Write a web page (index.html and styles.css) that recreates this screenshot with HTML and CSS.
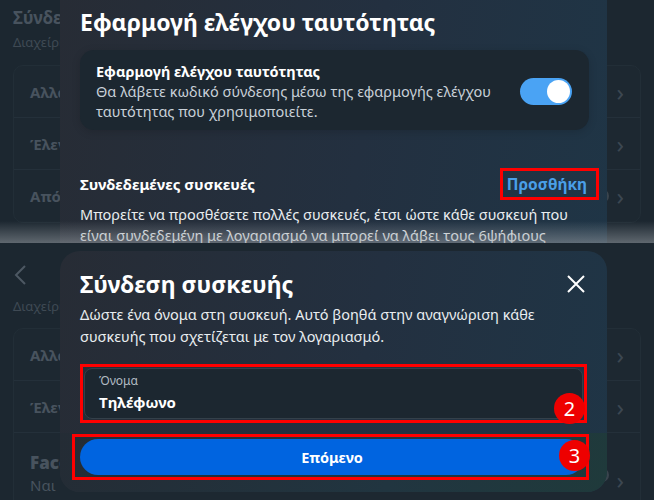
FILE: index.html
```html
<!DOCTYPE html>
<html lang="el">
	<head>
		<meta charset="utf-8"/>
		<meta name="viewport" content="width=device-width, initial-scale=1">
		<link rel="stylesheet" href="styles.css">
		<title>Εφαρμογή ελέγχου ταυτότητας</title>
	</head>
	<body>
		<!-- first capture: authenticator settings sheet -->
		<div class="shot shot-top">
			<div class="page">
				<div class="page-head">
					<h2>Σύνδεση</h2>
					<p>Διαχείριση</p>
				</div>
				<div class="list">
					<div class="row"><span>Αλλαγή</span><span class="chev">&#8250;</span></div>
					<div class="row"><span>Έλεγχος</span><span class="chev">&#8250;</span></div>
					<div class="row"><span>Απόρρητο</span><span class="dot"></span><span class="chev">&#8250;</span></div>
				</div>
			</div>
			<div class="sheet sheet-top">
				<h1>Εφαρμογή ελέγχου ταυτότητας</h1>
				<div class="card">
					<div class="card-text">
						<strong>Εφαρμογή ελέγχου ταυτότητας</strong>
						<p>Θα λάβετε κωδικό σύνδεσης μέσω της εφαρμογής ελέγχου ταυτότητας που χρησιμοποιείτε.</p>
					</div>
					<div class="toggle"><span class="knob"></span></div>
				</div>
				<div class="devices-head">
					<strong>Συνδεδεμένες συσκευές</strong>
					<span class="mark add">Προσθήκη</span>
				</div>
				<p class="devices-text">Μπορείτε να προσθέσετε πολλές συσκευές, έτσι ώστε κάθε συσκευή που είναι συνδεδεμένη με λογαριασμό να μπορεί να λάβει τους 6ψήφιους κωδικούς.</p>
			</div>
			<div class="fade"></div>
		</div>

		<!-- second capture: add device dialog -->
		<div class="shot shot-bottom">
			<div class="page">
				<div class="page-head">
					<span class="back">
						<svg width="14" height="22" viewBox="0 0 14 22"><path d="M12 2 L3 11 L12 20" fill="none" stroke="#4d5863" stroke-width="2"/></svg>
					</span>
					<p>Διαχείριση</p>
				</div>
				<div class="list">
					<div class="row"><span>Αλλαγή</span><span class="chev">&#8250;</span></div>
					<div class="row"><span>Έλεγχος</span><span class="chev">&#8250;</span></div>
					<div class="row row-two"><span class="two"><b>Face ID</b><i>Ναι</i></span><span class="dot"></span><span class="chev">&#8250;</span></div>
				</div>
			</div>
			<div class="sheet sheet-bottom">
				<div class="dialog-head">
					<h1>Σύνδεση συσκευής</h1>
					<svg class="close" width="18" height="18" viewBox="0 0 18 18"><path d="M1 1 L17 17 M17 1 L1 17" stroke="#ffffff" stroke-width="2"/></svg>
				</div>
				<p class="dialog-text">Δώστε ένα όνομα στη συσκευή. Αυτό βοηθά στην αναγνώριση κάθε συσκευής που σχετίζεται με τον λογαριασμό.</p>
				<div class="mark field-mark">
					<div class="field">
						<span class="label">Όνομα</span>
						<span class="value">Τηλέφωνο</span>
					</div>
					<span class="badge badge-2">2</span>
				</div>
				<div class="footer">
					<div class="mark button-mark">
						<div class="button">Επόμενο</div>
						<span class="badge badge-3">3</span>
					</div>
				</div>
			</div>
		</div>
	</body>
</html>
```
FILE: styles.css
```css
* {
	margin: 0;
	padding: 0;
	box-sizing: border-box;
}
body {
	width: 654px;
	background-color: #1b252d;
	font-family: "Noto Sans", "Open Sans", sans-serif;
	color: #ffffff;
}
.shot {
	position: relative;
	overflow: hidden;
	background-color: #1c2730;
}
.shot-top {
	height: 243px;
}
.shot-bottom {
	height: 257px;
}

/* dimmed page behind the sheets */
.page {
	padding: 0 13px;
	color: #48535e;
}
.page-head h2 {
	font-size: 17px;
	line-height: 22px;
	padding-top: 7px;
}
.page-head p {
	font-size: 13px;
	line-height: 20px;
	padding-top: 3px;
	color: #3f4a54;
}
.shot-top .list {
	margin-top: 13px;
}
.shot-bottom .page-head {
	padding-top: 21px;
}
.shot-bottom .page-head p {
	padding-top: 5px;
}
.shot-bottom .list {
	margin-top: 12px;
}
.list {
	border: 1px solid #222e37;
	border-radius: 10px;
	background-color: #1d2831;
}
.row {
	display: flex;
	align-items: center;
	height: 52px;
	padding: 0 16px;
	font-size: 15px;
	font-weight: bold;
	border-bottom: 1px solid #24303a;
}
.row:last-child {
	border-bottom: none;
}
.row > span:first-child {
	flex: 1;
}
.row-two {
	align-items: flex-start;
	height: 76px;
	padding-top: 19px;
}
.row-two .dot,
.row-two .chev {
	margin-top: 16px;
}
.two b {
	display: block;
	font-size: 17px;
	line-height: 22px;
}
.two i {
	display: block;
	font-style: normal;
	font-weight: normal;
	font-size: 15px;
	line-height: 22px;
}
.dot {
	width: 14px;
	height: 14px;
	border-radius: 50%;
	background-color: #3a444d;
	margin-right: 8px;
}
.chev {
	font-size: 24px;
	font-weight: normal;
	color: #3c4751;
	line-height: 1;
}

/* sheets */
.sheet {
	position: absolute;
	left: 60px;
	width: 547px;
	padding: 0 18px 0 20px;
	background: linear-gradient(100deg, #272c35 0%, #233040 55%, #1f3546 100%);
}
.sheet h1 {
	font-size: 23px;
	line-height: 28px;
	font-weight: bold;
}
.sheet-top {
	top: 0;
	height: 260px;
}
.sheet-top h1 {
	padding-top: 8px;
}
.card {
	display: flex;
	align-items: center;
	margin-top: 14px;
	padding: 11px 17px 9px 16px;
	background-color: #1c2730;
	border-radius: 14px;
	box-shadow: 0 2px 8px rgba(0, 0, 0, 0.15);
}
.card-text {
	flex: 1;
	font-size: 14.5px;
	line-height: 20px;
}
.card-text p {
	color: #c8d0d8;
	padding-right: 12px;
}
.toggle {
	position: relative;
	width: 52px;
	height: 27px;
	border-radius: 14px;
	background-color: #4aa3f4;
}
.knob {
	position: absolute;
	right: 2px;
	top: 2px;
	width: 23px;
	height: 23px;
	border-radius: 50%;
	background-color: #ffffff;
}
.devices-head {
	display: flex;
	align-items: center;
	justify-content: space-between;
	margin-top: 38px;
	font-size: 15px;
}
.mark {
	border: 3px solid #ff0000;
}
.add {
	padding: 3px 9px 3px 4px;
	margin-right: -10px;
	font-size: 15.5px;
	line-height: 20px;
	color: #4a9fe8;
	font-weight: bold;
}
.devices-text {
	margin-top: 4px;
	font-size: 14.5px;
	line-height: 21px;
	color: #e9edf0;
}
.fade {
	position: absolute;
	left: 0;
	right: 0;
	bottom: 0;
	height: 22px;
	background: linear-gradient(rgba(150, 156, 162, 0), rgba(150, 156, 162, 0.55));
}

/* add device dialog */
.sheet-bottom {
	top: 8px;
	height: 241px;
	border-radius: 20px;
	overflow: hidden;
}
.dialog-head {
	display: flex;
	align-items: center;
	justify-content: space-between;
	padding-top: 19px;
	padding-right: 4px;
}
.dialog-text {
	margin-top: 5px;
	font-size: 14.5px;
	line-height: 22px;
	color: #e9edf0;
}
.field-mark {
	position: relative;
	margin-top: 17px;
	margin-right: 2px;
	padding: 1px;
}
.field {
	display: flex;
	flex-direction: column;
	padding: 3px 14px 4px;
	background-color: #1c2730;
	border: 1px solid #34404a;
	border-radius: 8px;
}
.label {
	font-size: 12px;
	line-height: 18px;
	color: #b3bcc4;
}
.value {
	font-size: 15px;
	font-weight: bold;
	line-height: 24px;
}
.badge {
	position: absolute;
	width: 31px;
	height: 31px;
	border-radius: 50%;
	background-color: #ee0000;
	color: #ffffff;
	font-size: 20px;
	line-height: 31px;
	text-align: center;
}
.badge-2 {
	right: -1px;
	bottom: -4px;
}
.footer {
	margin: 10px -18px 0 -20px;
	padding: 1px 18px 20px 12px;
	background: linear-gradient(100deg, #242c35 0%, #213540 60%, #1f3a3b 100%);
}
.button-mark {
	position: relative;
	padding: 2px 2px 2px 5px;
}
.button {
	height: 36px;
	border-radius: 18px;
	background-color: #0064e0;
	font-size: 14.5px;
	font-weight: bold;
	line-height: 36px;
	text-align: center;
}
.badge-3 {
	right: -4px;
	top: 3px;
}
```
